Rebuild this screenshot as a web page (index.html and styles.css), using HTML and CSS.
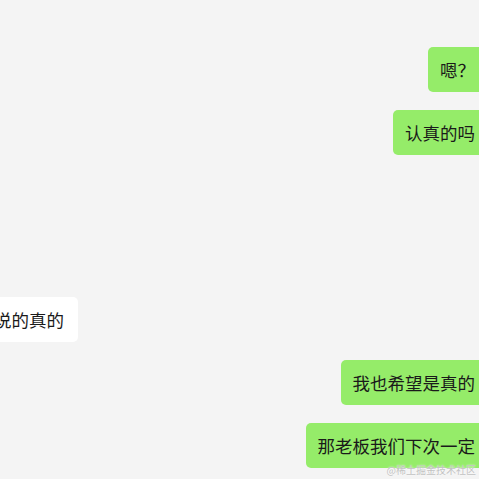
FILE: index.html
```html
<!DOCTYPE html>
<html lang="zh-CN">
<head>
    <meta charset="UTF-8">
    <meta name="viewport" content="width=device-width, initial-scale=1.0">
    <title>聊天</title>
    <link rel="stylesheet" href="styles.css">
</head>
<body>
    <div class="chat">
        <div class="msg mine"><div class="bubble">嗯？</div></div>
        <div class="msg mine"><div class="bubble">认真的吗</div></div>
        <div class="msg theirs later"><div class="bubble">说的真的</div></div>
        <div class="msg mine"><div class="bubble">我也希望是真的</div></div>
        <div class="msg mine"><div class="bubble">那老板我们下次一定</div></div>
    </div>
    <div class="watermark">@稀土掘金技术社区</div>
</body>
</html>
```

FILE: styles.css
```css
html, body {
    height: 100%;
}
body {
    margin: 0;
    overflow: hidden;
    background-color: #f4f4f4;
    font-family: "Noto Sans CJK SC", "Noto Sans", sans-serif;
    color: #1a1a1a;
}
.chat {
    display: flex;
    flex-direction: column;
    gap: 18px;
    padding-top: 47px;
    margin: 0 -8px 0 -18px;
}
.msg {
    display: flex;
}
.msg.mine {
    justify-content: flex-end;
}
.msg.theirs {
    justify-content: flex-start;
}
.msg.later {
    margin-top: 124px;
}
.bubble {
    padding: 10px 12px;
    font-size: 17.5px;
    line-height: 25px;
    border-radius: 5px;
}
.mine .bubble {
    background-color: #95ec69;
}
.theirs .bubble {
    background-color: #ffffff;
    padding-right: 14px;
}
.watermark {
    position: absolute;
    right: 3px;
    bottom: 3px;
    font-size: 10px;
    line-height: 12px;
    color: #c2c2c2;
    text-shadow: 0 0 2px #ffffff;
}
```
